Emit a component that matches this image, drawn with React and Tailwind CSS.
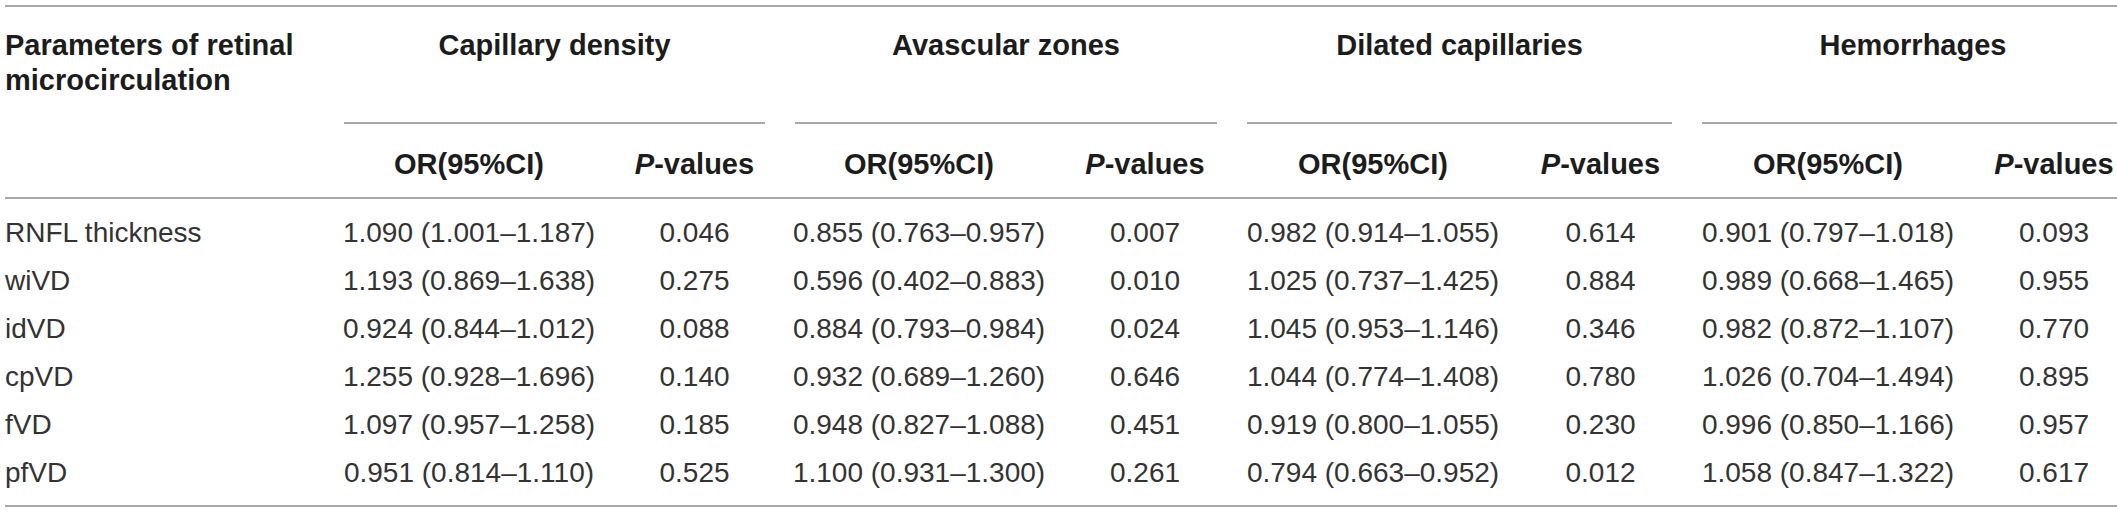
import React from 'react'

// Odds ratios of retinal microcirculation parameters per fundus finding
const groups = ['Capillary density', 'Avascular zones', 'Dilated capillaries', 'Hemorrhages']

const rows = [
  ['RNFL thickness', '1.090 (1.001–1.187)', '0.046', '0.855 (0.763–0.957)', '0.007', '0.982 (0.914–1.055)', '0.614', '0.901 (0.797–1.018)', '0.093'],
  ['wiVD', '1.193 (0.869–1.638)', '0.275', '0.596 (0.402–0.883)', '0.010', '1.025 (0.737–1.425)', '0.884', '0.989 (0.668–1.465)', '0.955'],
  ['idVD', '0.924 (0.844–1.012)', '0.088', '0.884 (0.793–0.984)', '0.024', '1.045 (0.953–1.146)', '0.346', '0.982 (0.872–1.107)', '0.770'],
  ['cpVD', '1.255 (0.928–1.696)', '0.140', '0.932 (0.689–1.260)', '0.646', '1.044 (0.774–1.408)', '0.780', '1.026 (0.704–1.494)', '0.895'],
  ['fVD', '1.097 (0.957–1.258)', '0.185', '0.948 (0.827–1.088)', '0.451', '0.919 (0.800–1.055)', '0.230', '0.996 (0.850–1.166)', '0.957'],
  ['pfVD', '0.951 (0.814–1.110)', '0.525', '1.100 (0.931–1.300)', '0.261', '0.794 (0.663–0.952)', '0.012', '1.058 (0.847–1.322)', '0.617'],
]

const cols = 'grid grid-cols-[324px_280px_171px_278px_174px_282px_173px_282px_170px]'

function SubHeader() {
  return (
    <>
      <div className="h-[73px] pt-[23px] text-center">OR(95%CI)</div>
      <div className="h-[73px] pt-[23px] text-center"><i>P</i>-values</div>
    </>
  )
}

export default function App() {
  return (
    <div className="w-[2117px] h-[512px] overflow-hidden bg-white pt-[5px] pl-[5px] font-['Liberation_Sans',Arial,sans-serif]">
      <div className="w-[2134px] border-t-2 border-b-2 border-[#a8a8a8]">

        {/* Header */}
        <div className={`${cols} border-b-2 border-[#a8a8a8] text-[29px] leading-[35px] font-bold text-[#1c1c1c]`}>
          <div className="row-span-2 pt-[21px]">
            Parameters of retinal<br />microcirculation
          </div>
          {groups.map(g => (
            <div key={g} className="col-span-2 px-[15px]">
              <div className="h-[117px] pt-[21px] text-center border-b-2 border-[#a8a8a8]">{g}</div>
            </div>
          ))}
          {groups.map(g => <SubHeader key={g} />)}
        </div>

        {/* Body */}
        <div className="pt-[10px] pb-[8px] text-[28px] leading-[48px] text-[#333]">
          {rows.map(r => (
            <div key={r[0]} className={`${cols} h-[48px]`}>
              {r.map((c, i) => (
                <div key={i} className={i === 0 ? 'whitespace-nowrap' : 'text-center whitespace-nowrap'}>{c}</div>
              ))}
            </div>
          ))}
        </div>
      </div>
    </div>
  )
}
